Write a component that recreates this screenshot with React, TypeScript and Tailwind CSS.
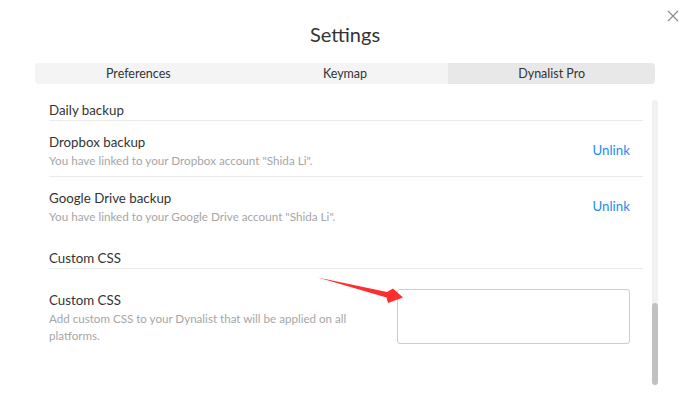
import React from 'react';

const tabs = ['Preferences', 'Keymap', 'Dynalist Pro'];

function SectionHeader({ title, className = '' }: { title: string; className?: string }) {
  return (
    <div className={`border-b border-[#ebebeb] text-[13.3px] leading-[20px] text-[#333] ${className}`}>
      {title}
    </div>
  );
}

function LinkRow({ title, desc, last }: { title: string; desc: string; last?: boolean }) {
  return (
    <div className={`flex items-center justify-between pt-[11px] pb-[8px] ${last ? '' : 'border-b border-[#ebebeb]'}`}>
      <div>
        <div className="text-[13.3px] leading-[20px] text-[#333]">{title}</div>
        <div className="text-[11.7px] leading-[16px] text-[#a6a6a6]">{desc}</div>
      </div>
      <button className="mr-[13px] mt-[-1px] text-[13.3px] leading-[20px] text-[#1e8cf0]">Unlink</button>
    </div>
  );
}

export default function App() {
  return (
    <div className="relative w-[690px] h-[410px] overflow-hidden bg-white font-['Lato','Liberation_Sans',sans-serif] text-[#333]">
      {/* close */}
      <button className="absolute left-[667px] top-[10px] w-[12px] h-[12px]">
        <svg viewBox="0 0 12 12" className="w-[12px] h-[12px]" fill="none" stroke="#8a8a8a" strokeWidth="1.1">
          <path d="M1 1 L11 11 M11 1 L1 11" />
        </svg>
      </button>

      <h1 className="pt-[21px] text-center text-[20px] leading-[26px] text-[#333]">Settings</h1>

      <div className="mx-[35px] mt-[16px] flex h-[21px] overflow-hidden rounded-[4px] bg-[#f4f4f4]">
        {tabs.map((t, i) => (
          <div
            key={t}
            className={`flex flex-1 items-center justify-center pt-[1px] text-[12.5px] text-[#333] ${
              i === 2 ? 'bg-[#e8e8e8]' : ''
            }`}
          >
            {t}
          </div>
        ))}
      </div>

      <div className="mt-[16px] flex">
        <div className="ml-[49px] w-[594px]">
          <SectionHeader title="Daily backup" />
          <LinkRow title="Dropbox backup" desc={'You have linked to your Dropbox account "Shida Li".'} />
          <LinkRow title="Google Drive backup" desc={'You have linked to your Google Drive account "Shida Li".'} last />
          <SectionHeader title="Custom CSS" className="mt-[16px]" />
          <div className="flex items-start justify-between pt-[20px]">
            <div className="w-[310px] pt-[1px]">
              <div className="text-[13.3px] leading-[20px] text-[#333]">Custom CSS</div>
              <div className="text-[11.6px] leading-[17px] text-[#a6a6a6]">
                Add custom CSS to your Dynalist that will be applied on all platforms.
              </div>
            </div>
            <textarea className="mr-[13px] h-[55px] w-[233px] resize-none rounded-[3px] border border-[#cccccc] outline-none" />
          </div>
        </div>
        <div className="ml-[9px] flex h-[285px] w-[6px] flex-col justify-end rounded-full bg-[#f1f1f1]">
          <div className="h-[82px] rounded-full bg-[#c1c1c1]" />
        </div>
      </div>

      {/* annotation arrow */}
      <svg className="pointer-events-none absolute left-0 top-0" width="690" height="410">
        <polygon points="318,277.5 387,292 393,288.5 403,297.5 388,303 386.5,297.5" fill="#ff2d2d" />
      </svg>
    </div>
  );
}
